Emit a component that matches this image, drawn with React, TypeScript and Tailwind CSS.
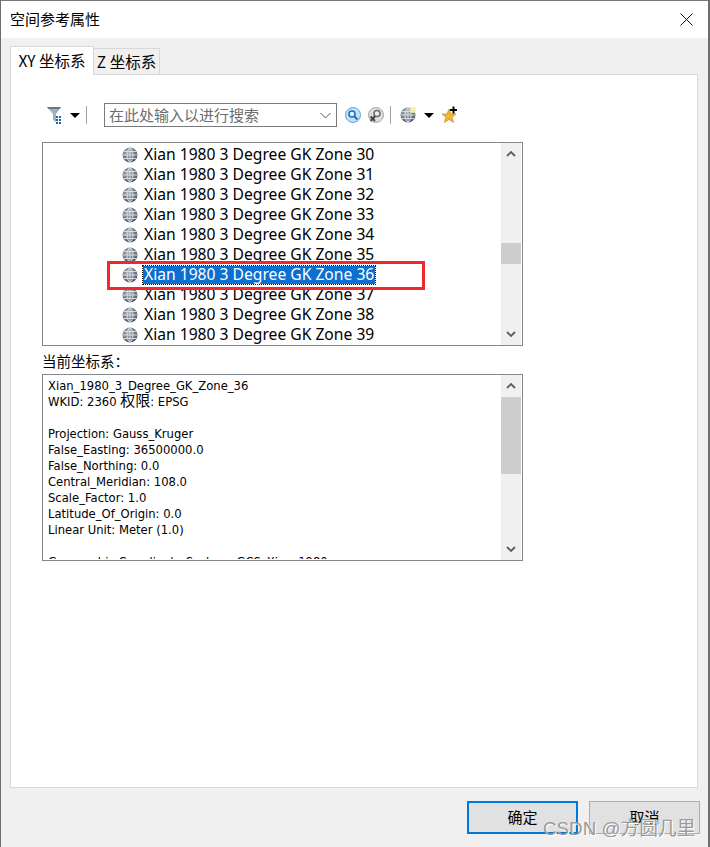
const zones = [30, 31, 32, 33, 34, 35, 36, 37, 38, 39]

const infoLines = [
  "Projection: Gauss_Kruger",
  "False_Easting: 36500000.0",
  "False_Northing: 0.0",
  "Central_Meridian: 108.0",
  "Scale_Factor: 1.0",
  "Latitude_Of_Origin: 0.0",
  "Linear Unit: Meter (1.0)",
]

const Globe = ({ size = 16 }: { size?: number }) => (
  <svg width={size} height={size} viewBox="0 0 16 16" fill="none">
    <defs>
      <radialGradient id="globe" cx="0.4" cy="0.35" r="0.75">
        <stop offset="0" stopColor="#aab2be" />
        <stop offset="1" stopColor="#48505c" />
      </radialGradient>
    </defs>
    <circle cx="8" cy="8" r="7.5" fill="url(#globe)" />
    <path d="M1 8h14M2 4.500h12M2 11.500h12M8 .5v15M8 .5C4 4 4 12 8 15.500M8 .5c4 3.500 4 11.500 0 15" stroke="#dfe3e9" strokeWidth="0.9" />
  </svg>
)

const Caret = () => (
  <svg width="10" height="5" viewBox="0 0 10 5"><path d="M0 0h10L5 5z" fill="#000" /></svg>
)

const Chevron = ({ up }: { up?: boolean }) => (
  <svg width="10" height="6" viewBox="0 0 10 6" fill="none">
    <path d={up ? "M1 5l4-4 4 4" : "M1 1l4 4 4-4"} stroke="#5d5d5d" strokeWidth="1.8" />
  </svg>
)

const Scrollbar = ({ thumbTop, thumbHeight }: { thumbTop: string; thumbHeight: string }) => (
  <div className="w-5 h-full mr-px bg-[#f0f0f0] flex flex-col shrink-0">
    <div className="h-[22px] flex items-center justify-center shrink-0"><Chevron up /></div>
    <div className="flex-1 flex flex-col">
      <div className={thumbTop} />
      <div className={`${thumbHeight} bg-[#cdcdcd]`} />
      <div className="flex-1" />
    </div>
    <div className="h-[22px] flex items-center justify-center shrink-0"><Chevron /></div>
  </div>
)

const Toolbar = () => (
  <div className="h-[28px] mt-[26px] ml-[35px] flex items-center">
    <svg width="18" height="18" viewBox="0 0 18 18" className="mr-[6px]">
      <path d="M1 1h14l-5 7v8l-3-2V8z" fill="#9fb0bd" />
      <path d="M1 1h14l-1.500 2h-11z" fill="#5f7a90" />
      <path d="M10 10h2v2h-2zM13 10h2v2h-2zM13 13h2v2h-2zM10 13h2v2h-2zM13 16h2v2h-2zM10 16h2v2h-2z" fill="#1c64b4" />
    </svg>
    <Caret />
    <div className="w-px h-[18px] bg-[#a0a0a0] ml-[6px] mr-[17px]" />
    <div className="w-[233px] h-[24px] border border-[#7a7a7a] bg-white flex items-center justify-between pl-1 pr-[5px]">
      <span className="text-[15px] text-[#6d6d6d] font-['Noto_Sans_CJK_SC',sans-serif]">在此处输入以进行搜索</span>
      <svg width="11" height="7" viewBox="0 0 11 7" fill="none"><path d="M.5 1l5 5 5-5" stroke="#555" /></svg>
    </div>
    <svg width="16" height="16" viewBox="0 0 16 16" className="ml-[8px]">
      <circle cx="8" cy="8" r="7.500" fill="#bfe0f5" stroke="#6aa5d6" />
      <circle cx="7" cy="7" r="3" fill="#e8f5fd" stroke="#1a6fc4" strokeWidth="1.600" />
      <path d="M9.500 9.500l3 3" stroke="#1a6fc4" strokeWidth="2" />
    </svg>
    <svg width="16" height="16" viewBox="0 0 16 16" className="ml-[7px]">
      <circle cx="8" cy="8" r="7.500" fill="#dedede" stroke="#a8a8a8" />
      <circle cx="9" cy="6.500" r="3" fill="#f0f0f0" stroke="#6e6e6e" strokeWidth="1.600" />
      <path d="M7 9l-2 2" stroke="#6e6e6e" strokeWidth="2" />
      <path d="M2.500 9.500l4.500 4.500M7 9.500l-4.500 4.500" stroke="#444" strokeWidth="1.800" />
    </svg>
    <div className="w-px h-[18px] bg-[#a0a0a0] ml-[6px] mr-[9px]" />
    <div className="relative w-4 h-4">
      <Globe />
      <span className="absolute top-0 right-0 w-[6px] h-[6px] rounded-full bg-[#f6eeaa]" />
    </div>
    <div className="ml-[8px]"><Caret /></div>
    <svg width="17" height="18" viewBox="0 0 17 18" className="ml-[8px] -mt-px">
      <path d="M7 3l2 5h5l-4 3.200 1.600 5.300L7 13.400 2.400 16.500 4 11.200 0 8h5z" fill="#f2b632" stroke="#c98a1a" strokeWidth="0.7" />
      <path d="M8 3h2.500V.5h2V3H15v2h-2.500v2.500h-2V5H8z" fill="#000" />
    </svg>
  </div>
)

const ZoneList = () => (
  <div className="relative h-[204px] mt-[13px] ml-[31px] w-[481px] border border-[#828790] bg-white flex">
    <div className="flex-1 h-full overflow-hidden pl-[79px] pt-[2px]">
      {zones.map((zone) => (
        <div key={zone} className="h-5 flex items-center gap-[6px] text-[15.65px] text-black">
          <Globe />
          <span className={zone === 36 ? "bg-[#0a6fd1] text-white outline-1 outline-dotted outline-[#1c1208] h-[18px] leading-[16px] pl-[1px] pr-[1px] -ml-[1px]" : ""}>
            Xian 1980 3 Degree GK Zone {zone}
          </span>
        </div>
      ))}
    </div>
    <Scrollbar thumbTop="h-[78px]" thumbHeight="h-[21px]" />
    <div className="absolute left-[64px] top-[118px] w-[318px] h-[29px] border-[3px] border-[#f0282d]" />
  </div>
)

const InfoBox = () => (
  <div className="h-[187px] ml-[31px] w-[481px] border border-[#828790] bg-white flex">
    <div className="flex-1 h-[184px] overflow-hidden pl-[5px] pt-[3px] leading-4 text-black font-['DejaVu_Sans',sans-serif] text-[11.6px]">
      <div>Xian_1980_3_Degree_GK_Zone_36</div>
      <div className="h-4 whitespace-pre">WKID: 2360 <span className="text-[15px] leading-[0] font-['Noto_Sans_CJK_SC',sans-serif]">权限</span>: EPSG</div>
      <div className="h-4" />
      {infoLines.map((line) => <div key={line}>{line}</div>)}
      <div className="h-4" />
      <div>Geographic Coordinate System: GCS_Xian_1980</div>
    </div>
    <Scrollbar thumbTop="h-0" thumbHeight="h-[77px]" />
  </div>
)

const App = () => {
  return (
    <div className="relative w-[710px] h-[847px] border-t border-l border-r-2 border-[#6e6e6e] border-t-[#777777] bg-[#f0f0f0] flex flex-col font-['Noto_Sans',sans-serif] overflow-hidden">
      <div className="h-[37px] bg-white shrink-0 flex items-center justify-between pl-[9px] pr-[15px]">
        <span className="text-[15px] text-black font-['Noto_Sans_CJK_SC',sans-serif]">空间参考属性</span>
        <svg width="13" height="13" viewBox="0 0 13 13" fill="none"><path d="M.5.5l12 12M12.500.5l-12 12" stroke="#111" /></svg>
      </div>

      <div className="flex items-end ml-[9px] h-[37px] shrink-0 relative z-10 font-['Noto_Sans_CJK_SC',sans-serif]">
        <div className="w-[84px] h-[29px] bg-white border border-b-0 border-[#d9d9d9] flex items-center justify-center text-[15.5px] text-black">XY 坐标系</div>
        <div className="w-[66px] h-[26px] mb-px bg-[#f0f0f0] border border-l-0 border-b-0 border-[#d9d9d9] flex items-center justify-center text-[15.5px] text-black">Z 坐标系</div>
      </div>

      <div className="h-[714px] ml-[9px] w-[688px] -mt-px bg-white border border-[#d9d9d9] shrink-0 flex flex-col">
        <Toolbar />
        <ZoneList />
        <div className="h-[28px] pt-px ml-[31px] flex items-center text-[14.5px] text-black font-['Noto_Sans_CJK_SC',sans-serif]">当前坐标系：</div>
        <InfoBox />
      </div>

      <div className="flex justify-end gap-[11px] pr-[8px] mt-[13px] font-['Noto_Sans_CJK_SC',sans-serif] text-[15px] text-black">
        <div className="w-[111px] h-[33px] bg-[#e1e1e1] border-[2px] border-[#0078d7] flex items-center justify-center">确定</div>
        <div className="w-[111px] h-[33px] bg-[#e1e1e1] border border-[#adadad] flex items-center justify-center">取消</div>
      </div>

      <div className="absolute left-[542px] top-[814px] text-[18.8px] text-[#9a9a9a] font-['Liberation_Sans','Noto_Sans_CJK_SC',sans-serif] [text-shadow:1px_1px_0_#ffffff] whitespace-nowrap">CSDN @方圆几里</div>
    </div>
  )
}

export default App
